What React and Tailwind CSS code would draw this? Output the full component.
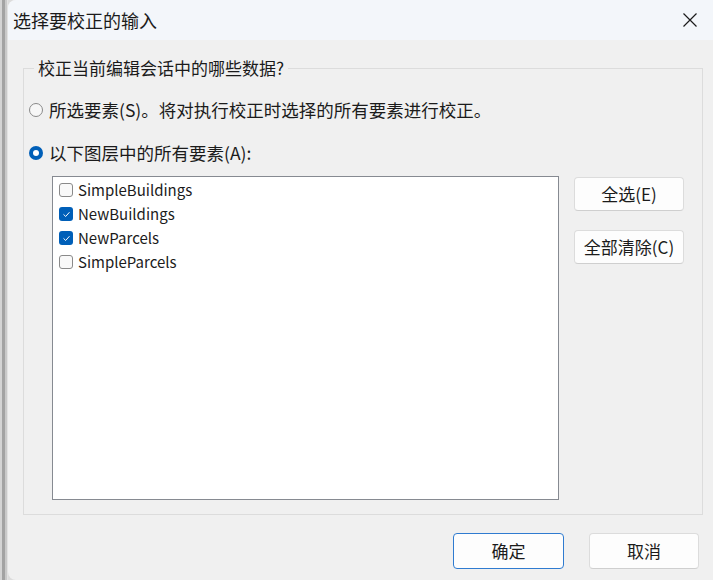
import { useState } from "react";

const layers = [
  { name: "SimpleBuildings", checked: false },
  { name: "NewBuildings", checked: true },
  { name: "NewParcels", checked: true },
  { name: "SimpleParcels", checked: false },
];

const Radio = ({ selected }) =>
  selected ? (
    <span className="w-[14px] h-[14px] rounded-full bg-[#005fb8] flex items-center justify-center shrink-0">
      <span className="w-[6px] h-[6px] rounded-full bg-white"></span>
    </span>
  ) : (
    <span className="w-[14px] h-[14px] rounded-full border border-[#8a8a8a] bg-[#f7f7f7] shrink-0"></span>
  );

const Checkbox = ({ checked }) =>
  checked ? (
    <span className="w-[14px] h-[14px] rounded-[3px] bg-[#005fb8] flex items-center justify-center shrink-0">
      <svg width="9" height="9" viewBox="0 0 10 10" fill="none">
        <path d="M2 5.2 L4.1 7.2 L8 2.8" stroke="white" strokeWidth="1.1" strokeLinecap="round" strokeLinejoin="round" />
      </svg>
    </span>
  ) : (
    <span className="w-[14px] h-[14px] rounded-[3px] border border-[#8a8a8a] bg-[#f9f9f9] shrink-0"></span>
  );

const Button = ({ children, primary, className }) => (
  <button
    className={
      "rounded-[4px] bg-[#fdfdfd] text-[17px] text-[#1b1b1b] flex items-center justify-center " +
      (primary ? "border border-[#2f7bd0]" : "border border-[#dcdcdc] border-b-[#cfcfcf]") +
      " " +
      className
    }
  >
    {children}
  </button>
);

export default function App() {
  const [items] = useState(layers);

  return (
    <div
      className="w-[713px] h-[580px] flex bg-[#dcdcdc] text-[#1b1b1b]"
      style={{ fontFamily: '"Noto Sans CJK SC", "Noto Sans", sans-serif' }}
    >
      {/* window edge behind */}
      <div className="flex h-full shrink-0">
        <div className="w-[2px] bg-[#d4d4d4]"></div>
        <div className="w-[3px] bg-[#a3a3a3]"></div>
        <div className="w-[2px] bg-[#c9c9c9]"></div>
        <div className="w-[1px] bg-[#e2e2e2]"></div>
      </div>

      <div className="flex-1 flex flex-col rounded-tl-[8px] rounded-bl-[8px] overflow-hidden bg-[#f0f0f0]">
        {/* title bar */}
        <div className="h-[40px] bg-[#f3f6fa] flex items-center justify-between pl-[5px] pr-[15px] shrink-0">
          <span className="text-[18px] leading-none">选择要校正的输入</span>
          <svg width="16" height="16" viewBox="0 0 16 16">
            <path d="M1.5 1.5 L14.5 14.5 M14.5 1.5 L1.5 14.5" stroke="#1b1b1b" strokeWidth="1.2" />
          </svg>
        </div>

        <div className="flex-1 flex flex-col">
          <fieldset className="mt-[16px] ml-[15px] mr-[10px] border border-[#dcdcdc] h-[459px] flex flex-col pl-[5px]">
            <legend className="ml-[5px] px-[4px] text-[17px] leading-[24px]">校正当前编辑会话中的哪些数据?</legend>

            <div className="flex items-center gap-[6px] mt-[18px] h-[24px] text-[17.5px]">
              <Radio selected={false} />
              <span>所选要素(S)。将对执行校正时选择的所有要素进行校正。</span>
            </div>

            <div className="flex items-center gap-[6px] mt-[19px] h-[24px] text-[17.5px]">
              <Radio selected />
              <span>以下图层中的所有要素(A):</span>
            </div>

            <div className="flex mt-[11px] ml-[23px]">
              <div className="w-[507px] h-[324px] bg-white border border-[#868a91] pt-[1px] pl-[6px]">
                {items.map((item) => (
                  <div key={item.name} className="flex items-center gap-[5px] h-[24px] text-[15px]">
                    <Checkbox checked={item.checked} />
                    <span>{item.name}</span>
                  </div>
                ))}
              </div>
              <div className="flex flex-col gap-[19px] ml-[15px] mt-[1px]">
                <Button className="w-[110px] h-[34px]">全选(E)</Button>
                <Button className="w-[110px] h-[34px]">全部清除(C)</Button>
              </div>
            </div>
          </fieldset>

          <div className="flex justify-end gap-[25px] mt-[18px] pr-[14px]">
            <Button primary className="w-[111px] h-[36px]">确定</Button>
            <Button className="w-[110px] h-[36px]">取消</Button>
          </div>
        </div>
      </div>
    </div>
  );
}
